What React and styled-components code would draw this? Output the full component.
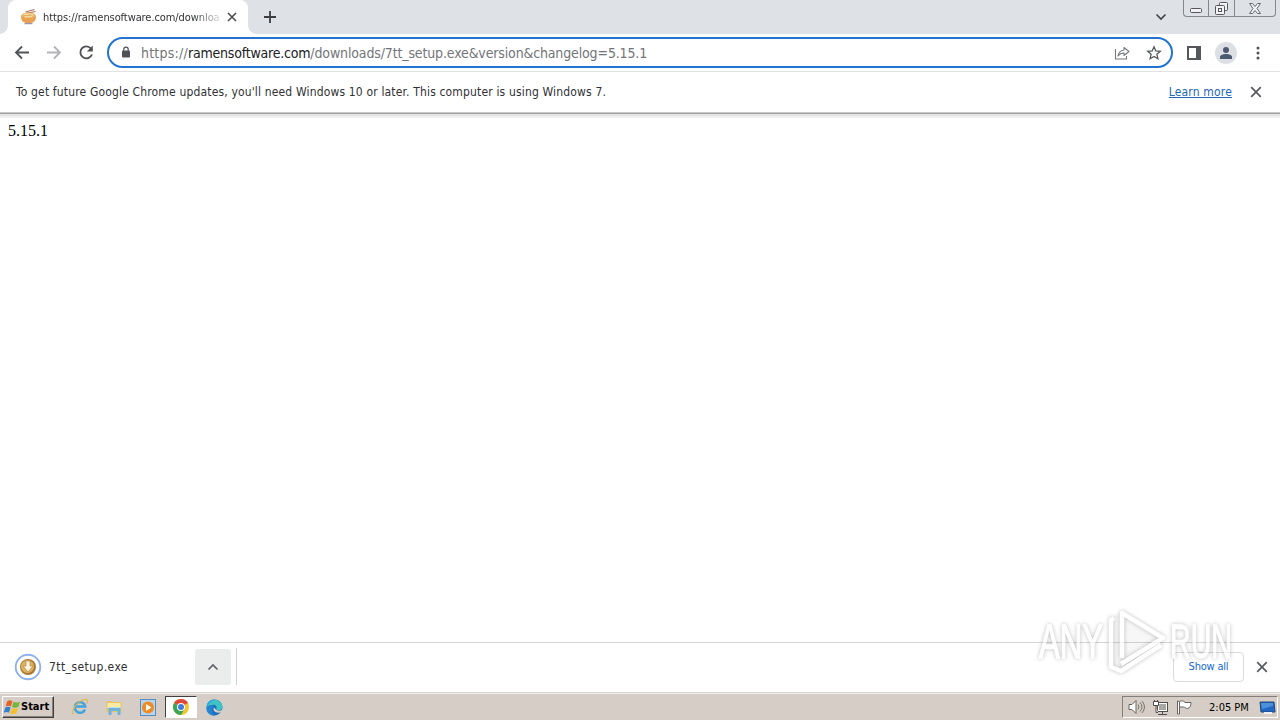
import React from "react";
import styled, { createGlobalStyle } from "styled-components";

const GlobalStyle = createGlobalStyle`
  * {
    box-sizing: border-box;
  }

  body {
    margin: 0;
    background: #fff;
    font-family: "DejaVu Sans Condensed", "Noto Sans", sans-serif;
    overflow: hidden;
  }

  svg {
    display: block;
    flex: none;
  }
`;

const Desktop = styled.div`
  position: relative;
  display: flex;
  flex-direction: column;
  width: 1280px;
  height: 720px;
`;

const Label = styled.span`
  font-family: ${(props) => props.$family || "inherit"};
  font-size: ${(props) => props.$size}px;
  font-weight: ${(props) => props.$weight || 400};
  letter-spacing: ${(props) => props.$spacing || 0}px;
  color: ${(props) => props.$color || "#303134"};
  line-height: 16px;
  white-space: nowrap;
`;

/* tab strip */

const TabStrip = styled.header`
  display: flex;
  height: 34px;
  padding-left: 8px;
  background: #dee1e6;
`;

const Tab = styled.div`
  position: relative;
  display: flex;
  align-items: center;
  width: 240px;
  height: 34px;
  padding: 0 10px 0 12px;
  border-radius: 8px 8px 0 0;
  background: #fff;

  &::before,
  &::after {
    content: "";
    position: absolute;
    bottom: 0;
    width: 8px;
    height: 8px;
  }

  &::before {
    left: -8px;
    background: radial-gradient(circle at 0 0, transparent 7.5px, #fff 8px);
  }

  &::after {
    right: -8px;
    background: radial-gradient(circle at 100% 0, transparent 7.5px, #fff 8px);
  }
`;

const TabTitle = styled.div`
  width: 177px;
  margin: 0 7px 0 6px;
  overflow: hidden;
  line-height: 16px;
  mask-image: linear-gradient(to right, #000 150px, transparent 182px);
`;

const NewTab = styled.div`
  padding: 11px 0 0 16px;
`;

const TabSearch = styled.div`
  margin-left: auto;
  padding: 13px 16px 0 0;
`;

const WindowControls = styled.div`
  display: flex;
  width: 93px;
  height: 17px;
  margin-right: 4px;
  border: 1px solid #84878c;
  border-top: none;
  border-radius: 0 0 4px 4px;
`;

const ControlButton = styled.div`
  display: flex;
  justify-content: center;
  align-items: center;
  width: ${(props) => props.$width}px;
  padding-top: ${(props) => props.$drop || 0}px;
  border-left: ${(props) => (props.$first ? "none" : "1px solid #84878c")};
`;

/* toolbar */

const Toolbar = styled.div`
  display: flex;
  align-items: center;
  height: 38px;
  padding: 0 13px 0 13px;
  border-bottom: 1px solid #dfe1e4;
`;

const NavButtons = styled.div`
  display: flex;
  gap: 14px;
  width: 94px;
`;

const AddressBar = styled.div`
  display: flex;
  align-items: center;
  width: 1066px;
  height: 31px;
  padding: 0 9px 0 11px;
  border: 2px solid #2273d0;
  border-radius: 16px;
`;

const Url = styled.div`
  flex: 1;
  margin-left: 9px;
  line-height: 16px;
`;

const AddressActions = styled.div`
  display: flex;
  gap: 16px;
`;

const Avatar = styled.div`
  display: flex;
  align-items: center;
  justify-content: center;
  width: 22px;
  height: 22px;
  margin: 0 14px 0 14px;
  border-radius: 50%;
  background: #dcdfe4;
`;

const SidePanel = styled.div`
  width: 14px;
  height: 14px;
  margin-left: 14px;
  border: 2px solid #55575b;
  border-right-width: 5px;
`;

/* update notice */

const InfoBar = styled.div`
  display: flex;
  align-items: center;
  height: 40px;
  padding: 0 18px 0 16px;
`;

const LearnMore = styled.a`
  margin-left: auto;
  margin-right: 18px;
  font-size: 12px;
  line-height: 16px;
  letter-spacing: 0.17px;
  color: #2267b8;
  text-decoration: underline;
`;

const InfoShadow = styled.div`
  height: 6px;
  background: linear-gradient(#c8c8c8 0 1px, #a5a5a5 1px 2px, #dcdcdc 2px, #f6f6f6);
`;

const Page = styled.main`
  flex: 1;
  padding: 3px 8px;
`;

/* downloads */

const DownloadShelf = styled.section`
  display: flex;
  align-items: center;
  height: 50px;
  padding: 0 12px 2px 14px;
  border-top: 1px solid #d5d7da;
`;

const FileName = styled.div`
  width: 146px;
  margin-left: 7px;
  line-height: 16px;
`;

const ShelfMenu = styled.div`
  display: flex;
  align-items: center;
  justify-content: center;
  width: 36px;
  height: 36px;
  border-radius: 2px;
  background: #ebecec;
`;

const ShelfDivider = styled.div`
  width: 1px;
  height: 37px;
  margin-left: 5px;
  background: #d0d1d3;
`;

const ShowAll = styled.button`
  width: 71px;
  height: 30px;
  margin: 0 12px 0 auto;
  padding: 0;
  border: 1px solid #d9dbde;
  border-radius: 4px;
  background: #fff;
  font-family: inherit;
`;

/* taskbar */

const Taskbar = styled.footer`
  display: flex;
  align-items: center;
  height: 28px;
  padding: 2px 2px 1px 2px;
  border-top: 1px solid #d6d3ce;
  background: #d6cec6;
  box-shadow: inset 0 1px #f3f0eb;
`;

const StartButton = styled.div`
  display: flex;
  align-items: center;
  width: 52px;
  height: 22px;
  padding-left: 1px;
  border: 1px solid;
  border-color: #fff #404040 #404040 #fff;
  box-shadow: inset -1px -1px #848079;
`;

const QuickLaunch = styled.div`
  display: flex;
  align-items: center;
  margin-left: 9px;
`;

const TaskItem = styled.div`
  display: flex;
  align-items: center;
  justify-content: center;
  width: ${(props) => (props.$active ? 32 : 34)}px;
  height: 22px;
  border: ${(props) => (props.$active ? "1px solid" : "none")};
  border-color: #404040 #fff #fff #404040;
  background: ${(props) => (props.$active ? "#fff" : "transparent")};
`;

const Tray = styled.div`
  display: flex;
  align-items: center;
  width: 156px;
  height: 22px;
  margin-left: auto;
  padding: 0 1px 0 5px;
  border: 1px solid;
  border-color: #848079 #fff #fff #848079;
`;

const TrayIcons = styled.div`
  display: flex;
  align-items: center;
  gap: 7px;
  margin-right: 16px;
`;

const Clock = styled.div`
  width: 50px;
  line-height: 16px;
`;

/* stamp in the lower right corner */

const Watermark = styled.div`
  position: absolute;
  left: 1030px;
  top: 602px;
  filter: drop-shadow(0 0 2px rgba(0, 0, 0, 0.38));
  opacity: 0.68;
`;

const CloseIcon = ({ size = 9, color = "#5b5d61" }) => (
  <svg width={size} height={size} viewBox="0 0 10 10">
    <path d="M1 1l8 8M9 1L1 9" stroke={color} strokeWidth="1.5" />
  </svg>
);

const RamenIcon = () => (
  <svg width="17" height="16" viewBox="0 0 16 16">
    <path d="M5 3L14 .5M5 4.500l10-2" stroke="#a7674b" strokeWidth="1" />
    <ellipse cx="8" cy="7" rx="7.5" ry="3.500" fill="#e4b066" />
    <path d="M.5 7c0 6 3 7 7.500 7s7.500-1 7.500-7c-3 3-12 3-15 0z" fill="#eba052" />
    <path d="M3 6c2-2 3 0 5-1s3 1 5 1M4 8c3-1 5 1 8-1" stroke="#fff0b8" fill="none" />
    <path d="M4 14.500h8" stroke="#a996a2" strokeWidth="1.500" />
  </svg>
);

const BackIcon = ({ flip, color }) => (
  <svg width="18" height="18" viewBox="0 0 18 18">
    <path
      d={flip ? "M2 8.500h13M9 2.500l6 6-6 6" : "M16 8.500H3M9 2.500l-6 6 6 6"}
      fill="none"
      stroke={color}
      strokeWidth="1.800"
    />
  </svg>
);

const ReloadIcon = () => (
  <svg width="18" height="18" viewBox="0 0 18 18">
    <path d="M14 4.500A6 6 0 1 0 15 10.500" fill="none" stroke="#505256" strokeWidth="1.900" />
    <path d="M15.800 1.500v6H9.800z" fill="#505256" />
  </svg>
);

const LockIcon = () => (
  <svg width="12" height="14" viewBox="0 0 12 14">
    <rect x="2" y="4.500" width="8" height="7" rx="1" fill="#505256" />
    <path d="M3.800 5.500V3.300a2.200 2.200 0 0 1 4.400 0v2.200" fill="none" stroke="#505256" strokeWidth="1.200" />
  </svg>
);

const ShareIcon = () => (
  <svg width="16" height="16" viewBox="0 0 16 16" fill="none" stroke="#77797d" strokeWidth="1.100">
    <path d="M1.500 4v10h11v-3" />
    <path d="M10 2.500l5 4-5 4V8c-3 0-4.500 1-6 3 .5-3.500 2.500-5.500 6-6z" strokeLinejoin="round" />
  </svg>
);

const StarIcon = () => (
  <svg width="16" height="16" viewBox="0 0 16 16">
    <path
      d="M8 1.800l1.800 4.100 4.500.4-3.400 3 1 4.400L8 11.400l-3.900 2.300 1-4.400-3.400-3 4.500-.4z"
      fill="none"
      stroke="#55575b"
      strokeWidth="1.300"
    />
  </svg>
);

const DownloadIcon = () => (
  <svg width="28" height="28" viewBox="0 0 28 28">
    <circle cx="14" cy="14" r="12.300" fill="#fff" stroke="#8fb1ee" strokeWidth="1.900" />
    <circle cx="14" cy="14" r="8" fill="#a87936" />
    <circle cx="13.500" cy="13.500" r="6.500" fill="#dfb25f" />
    <path d="M12 8h4v5h3l-5 6-5-6h3z" fill="#fff5e3" stroke="#b6874c" strokeWidth=".7" />
  </svg>
);

const WindowsIcon = () => (
  <svg width="17" height="17" viewBox="0 0 16 16">
    <path d="M3 2c2-1 3-1 5 0L6.500 7C5 6 3.500 6 1.500 7z" fill="#e8622a" />
    <path d="M9 2.500c2 1 4 1 6 0L13.500 7.500c-2 1-4 1-6 0z" fill="#77b43c" />
    <path d="M1.200 8c2-1 3.500-1 5 0L4.700 13c-1.500-1-3-1-5 0z" fill="#3480d0" />
    <path d="M7.200 8.500c2 1 4 1 6 0L11.700 13.500c-2 1-4 1-6 0z" fill="#f4bf2e" />
  </svg>
);

const ExplorerIcon = () => (
  <svg width="18" height="18" viewBox="0 0 18 18">
    <path
      d="M14 11.500A5.300 5.300 0 1 1 14.300 8.500H5"
      fill="none"
      stroke="#41a4dc"
      strokeWidth="2.400"
    />
    <path d="M3 16C-1 14.500 5 4 13 1.500c4-1 4 2 3 4" fill="none" stroke="#e1b746" strokeWidth="1.200" />
  </svg>
);

const FolderIcon = () => (
  <svg width="17" height="17" viewBox="0 0 17 17">
    <path d="M.5 2h5l1 1h9v10H.5z" fill="#e2c56c" />
    <path d="M1.500 4h13v5h-13z" fill="#fbeaa0" />
    <path d="M2.500 16V9h12v7h-3v-4h-6v4z" fill="#6fb2da" />
    <path d="M3 8.500h11" stroke="#b6dfef" />
  </svg>
);

const PlayerIcon = () => (
  <svg width="16" height="17" viewBox="0 0 16 17">
    <rect x=".5" y=".5" width="15" height="16" fill="#b8d5ed" stroke="#568cbf" />
    <circle cx="8" cy="8.500" r="6" fill="#ef8b21" />
    <path d="M6 5v7l5.500-3.500z" fill="#fff" />
  </svg>
);

const ChromeIcon = () => (
  <svg width="16" height="16" viewBox="0 0 16 16">
    <circle cx="8" cy="8" r="8" fill="#f3c42d" />
    <path d="M8 8L1.070 4A8 8 0 0 1 14.930 4z" fill="#de493c" />
    <path d="M8 8L1.070 4A8 8 0 0 0 8 16l3.500-6z" fill="#3ca657" />
    <circle cx="8" cy="8" r="4" fill="#fff" />
    <circle cx="8" cy="8" r="3" fill="#427bdc" />
  </svg>
);

const EdgeIcon = () => (
  <svg width="17" height="17" viewBox="0 0 17 17">
    <path d="M.5 8.500a8 8 0 0 1 16 0c0 1-.3 2-1 2.500.3 1-2.500 5.500-7 5.500a8 8 0 0 1-8-8z" fill="#1c6fbd" />
    <path d="M.7 8C1-2 16-1 16.500 8c0 4-5 4-6.500 2 2-3-1-5-4-4-2 0-4 1-5.300 2z" fill="#3fc3c4" />
    <path d="M.5 8C1 2 6 0 9 1 6 2 4 3 .5 8z" fill="#2aa4dd" />
    <path d="M8 8.500c-2 4 3 6.500 7.500 4.500l1-2c-2 1-5 1-6.500-.5z" fill="#d6cec6" />
    <path d="M.5 9c2-3 5-3.500 7.500-2-3 2-3 7 1 9.500-5 .5-9-3-8.500-7.500z" fill="#2385d0" />
  </svg>
);

const SpeakerIcon = () => (
  <svg width="17" height="16" viewBox="0 0 17 16" fill="none">
    <path d="M1 5.500h3L8 1.500v13l-4-4H1z" fill="#fff" stroke="#66645f" />
    <path d="M10 5.500q2 2.500 0 5M12 3.500q4 4.500 0 9M14 2q5 6 0 12" stroke="#77736d" />
  </svg>
);

const NetworkIcon = () => (
  <svg width="17" height="17" viewBox="0 0 17 17" stroke="#504e4b">
    <rect x="5.500" y="3.500" width="10" height="9" fill="#fff" />
    <rect x="7" y="5" width="7" height="6" fill="#a8a7a3" stroke="none" />
    <path d="M6 15.500h9M10.500 13v2" />
    <path d="M1.500 2.500h5v4h-5zM2.500 1v2M5.500 1v2M4 7v6.500h2" fill="#fff" />
  </svg>
);

const FlagIcon = () => (
  <svg width="17" height="17" viewBox="0 0 17 17">
    <path
      d="M3.500 2.500c2-1 4-1 5.500 1h6c0 3-1 5.500-3.500 6-2 0-2.500-1.500-4-1.500h-4v7h-2v-13z"
      fill="#fff"
      stroke="#66645f"
    />
    <path d="M3.500 3v5.500" stroke="#66645f" />
  </svg>
);

const ScreenIcon = () => (
  <svg width="17" height="15" viewBox="0 0 17 15">
    <path d="M1 2h14l1 10H2z" fill="#2166c3" stroke="#214679" />
    <path d="M2 3h12v3L3 9z" fill="#4d91db" />
    <path d="M5 13h8" stroke="#eee" strokeWidth="2" />
  </svg>
);

const Stamp = () => (
  <Watermark>
    <svg width="210" height="76" viewBox="0 0 210 76">
      <g
        fill="#fff"
        stroke="#fff"
        strokeWidth="1.300"
        fontFamily="Liberation Sans Narrow, Liberation Sans, sans-serif"
        fontSize="49"
      >
        <text x="9" y="56" textLength="64" lengthAdjust="spacingAndGlyphs">ANY</text>
        <text x="140" y="56" textLength="62" lengthAdjust="spacingAndGlyphs">RUN</text>
      </g>
      <path d="M80 16L92 9l42 26-42 34-12-5z" fill="#000" fillOpacity=".04" />
      <g fill="none" stroke="#fff" strokeWidth="4.500" strokeLinejoin="round">
        <path d="M92 56V11l41 25-42 26" />
        <path d="M84 16l-3 2v47l10 4 40-26" />
      </g>
    </svg>
  </Watermark>
);

function App() {
  return (
    <Desktop>
      <GlobalStyle />
      <TabStrip>
        <Tab>
          <RamenIcon />
          <TabTitle>
            <Label $size={11} $spacing={-0.08}>https://ramensoftware.com/downloa</Label>
          </TabTitle>
          <CloseIcon size={10} color="#45474b" />
        </Tab>
        <NewTab>
          <svg width="12" height="12" viewBox="0 0 12 12">
            <path d="M6 0v12M0 6h12" stroke="#3c3e41" strokeWidth="1.800" />
          </svg>
        </NewTab>
        <TabSearch>
          <svg width="12" height="8" viewBox="0 0 12 8">
            <path d="M1.500 1.500L6 6l4.500-4.500" fill="none" stroke="#3f4144" strokeWidth="1.600" />
          </svg>
        </TabSearch>
        <WindowControls>
          <ControlButton $width={24} $drop={4} $first>
            <svg width="12" height="5" viewBox="0 0 12 5">
              <rect x=".5" y=".5" width="11" height="4" rx="1" fill="#f1f2f4" stroke="#55575c" />
            </svg>
          </ControlButton>
          <ControlButton $width={26}>
            <svg width="13" height="13" viewBox="0 0 13 13" fill="#f1f2f4" stroke="#55575c">
              <rect x="4.500" y=".5" width="8" height="8" rx="1" />
              <rect x=".5" y="3.500" width="9" height="9" rx="1" />
              <rect x="3.500" y="6.500" width="3" height="3" />
            </svg>
          </ControlButton>
          <ControlButton $width={41}>
            <svg width="12" height="11" viewBox="0 0 12 11">
              <path
                d="M.5.5h3L6 3.500 8.500.5h3l-3.500 5 3.500 5h-3L6 7.500l-2.500 3h-3L4 5.500z"
                fill="#f1f2f4"
                stroke="#66686d"
              />
            </svg>
          </ControlButton>
        </WindowControls>
      </TabStrip>

      <Toolbar>
        <NavButtons>
          <BackIcon color="#505256" />
          <BackIcon flip color="#b3b4b7" />
          <ReloadIcon />
        </NavButtons>
        <AddressBar>
          <LockIcon />
          <Url>
            <Label $size={14} $spacing={0.22} $color="#737579">https://</Label>
            <Label $size={14} $spacing={-0.2} $color="#202124">ramensoftware.com</Label>
            <Label $size={14} $spacing={-0.14} $color="#737579">
              /downloads/7tt_setup.exe&amp;version&amp;changelog=5.15.1
            </Label>
          </Url>
          <AddressActions>
            <ShareIcon />
            <StarIcon />
          </AddressActions>
        </AddressBar>
        <SidePanel />
        <Avatar>
          <svg width="14" height="14" viewBox="0 0 14 14" fill="#4b5971">
            <circle cx="7" cy="4" r="3" />
            <path d="M1 13v-2c0-2 3-3 6-3s6 1 6 3v2z" />
          </svg>
        </Avatar>
        <svg width="14" height="14" viewBox="0 0 14 14" fill="#505256">
          <circle cx="7" cy="2" r="1.500" />
          <circle cx="7" cy="7" r="1.500" />
          <circle cx="7" cy="12" r="1.500" />
        </svg>
      </Toolbar>

      <InfoBar>
        <Label $size={12} $spacing={0.16}>
          To get future Google Chrome updates, you'll need Windows 10 or later. This computer is using Windows 7.
        </Label>
        <LearnMore>Learn more</LearnMore>
        <CloseIcon size={12} />
      </InfoBar>
      <InfoShadow />

      <Page>
        <Label $family="Liberation Serif, serif" $size={16} $color="#000">5.15.1</Label>
      </Page>

      <DownloadShelf>
        <DownloadIcon />
        <FileName>
          <Label $size={12} $spacing={0.42}>7tt_setup.exe</Label>
        </FileName>
        <ShelfMenu>
          <svg width="12" height="8" viewBox="0 0 12 8">
            <path d="M1.500 6.500L6 2l4.500 4.500" fill="none" stroke="#606266" strokeWidth="1.700" />
          </svg>
        </ShelfMenu>
        <ShelfDivider />
        <ShowAll>
          <Label $size={11} $spacing={-0.2} $color="#1769cd">Show all</Label>
        </ShowAll>
        <CloseIcon size={12} />
      </DownloadShelf>

      <Taskbar>
        <StartButton>
          <WindowsIcon />
          <Label $size={11} $weight={700} $color="#000">Start</Label>
        </StartButton>
        <QuickLaunch>
          <TaskItem><ExplorerIcon /></TaskItem>
          <TaskItem><FolderIcon /></TaskItem>
          <TaskItem><PlayerIcon /></TaskItem>
          <TaskItem $active><ChromeIcon /></TaskItem>
          <TaskItem><EdgeIcon /></TaskItem>
        </QuickLaunch>
        <Tray>
          <TrayIcons>
            <SpeakerIcon />
            <NetworkIcon />
            <FlagIcon />
          </TrayIcons>
          <Clock>
            <Label $size={11} $color="#000">2:05 PM</Label>
          </Clock>
          <ScreenIcon />
        </Tray>
      </Taskbar>
      <Stamp />
    </Desktop>
  );
}

export default App;
